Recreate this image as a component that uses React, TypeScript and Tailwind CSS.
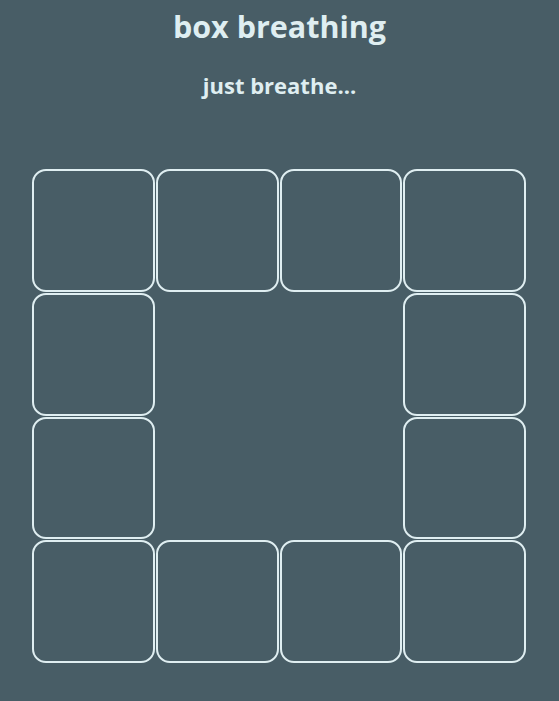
import React from 'react';

const cells = [
  true, true, true, true,
  true, false, false, true,
  true, false, false, true,
  true, true, true, true,
];

export default function App() {
  return (
    <div className="min-h-screen w-full bg-[#485d66] text-[#dfeef1] font-['Open_Sans',sans-serif]">
      <h1 className="pt-[6px] text-center text-[30.5px] font-bold leading-[40px]">box breathing</h1>
      <h2 className="mt-[25px] text-center text-[22px] font-bold leading-[28px]">just breathe...</h2>
      <div className="ml-[32px] mt-[70px] grid w-[494px] grid-cols-4 gap-px">
        {cells.map((on, i) => (
          <div
            key={i}
            className={on ? 'aspect-square rounded-[14px] border-2 border-[#dfeef1]' : 'aspect-square'}
          />
        ))}
      </div>
    </div>
  );
}
